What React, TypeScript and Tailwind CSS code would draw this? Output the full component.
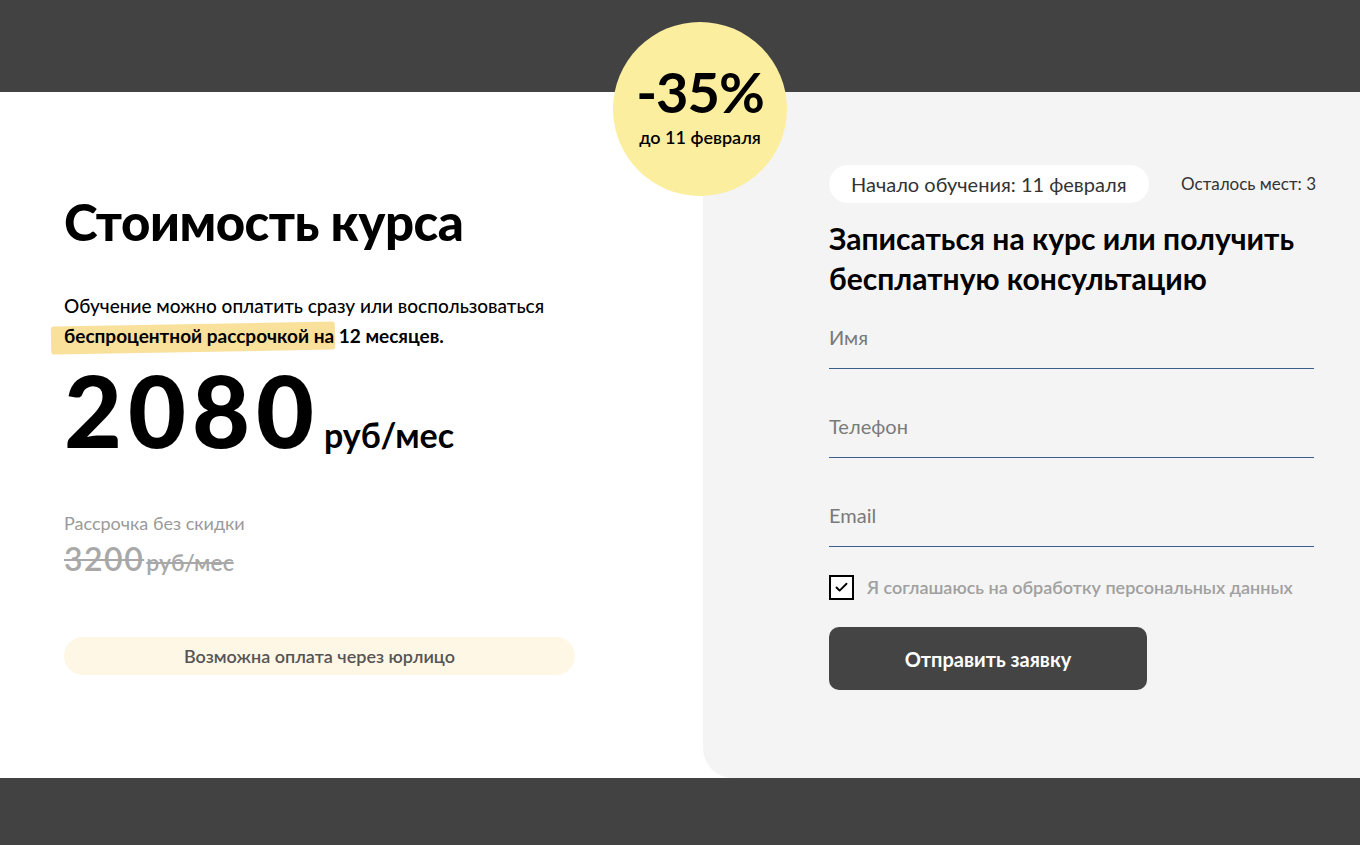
import { Check } from 'lucide-react'

const font = { fontFamily: '"Lato", "Noto Sans", sans-serif' }

function Field({ label }: { label: string }) {
  return (
    <div className="flex h-[89px] flex-col justify-end">
      <div className="pb-[21px] text-[20px] leading-none text-[#7a7a7a]">{label}</div>
      <div className="h-[1.5px] bg-[#3a5f8c]" />
    </div>
  )
}

export default function App() {
  return (
    <div className="flex min-h-[845px] flex-col bg-[#424242]" style={font}>
      {/* top bar with discount badge */}
      <div className="relative h-[92px] bg-[#424242]">
        <div className="absolute left-[613px] top-[22px] z-10 flex h-[174px] w-[174px] flex-col items-center justify-center rounded-full bg-[#fcee9f] pb-[6px] text-black">
          <div className="text-[56px] font-bold leading-[52px] tracking-[-1px]">-35%</div>
          <div className="mt-[10px] text-[18px] font-semibold leading-none">до 11 февраля</div>
        </div>
      </div>

      <div className="flex h-[686px] bg-white">
        {/* price */}
        <div className="w-[703px] pl-[64px] pt-[104px]">
          <h1 className="text-[51px] font-black leading-none tracking-[-0.5px] text-black">Стоимость курса</h1>
          <p className="relative isolate mt-[44px] text-[19px] font-medium leading-[30px] text-black">
            Обучение можно оплатить сразу или воспользоваться
            <br />
            <span className="absolute left-[-13px] top-[33px] -z-10 h-[28px] w-[284px] -rotate-[1deg] rounded-[3px] bg-[#f9e09b]" />
            <span className="font-bold">беспроцентной рассрочкой на 12 месяцев.</span>
          </p>
          <div className="mt-[8px] flex items-baseline">
            <span className="text-[100px] font-black leading-[100px] tracking-[6px] text-black">2080</span>
            <span className="ml-[4px] text-[34px] font-bold leading-none text-black">руб/мес</span>
          </div>
          <div className="mt-[55px] text-[18px] leading-none text-[#9a9a9a]">Рассрочка без скидки</div>
          <div className="mt-[11px] flex items-baseline text-[#a8a8a8] line-through decoration-[2px]">
            <span className="text-[32px] font-semibold leading-none tracking-[1.5px]">3200</span>
            <span className="ml-[2px] text-[23px] font-semibold leading-none">руб/мес</span>
          </div>
          <div className="mt-[62px] flex h-[38px] w-[511px] items-center justify-center rounded-full bg-[#fff7e5] text-[18px] font-semibold text-[#555]">
            Возможна оплата через юрлицо
          </div>
        </div>

        {/* form */}
        <div className="flex-1 rounded-bl-[30px] bg-[#f4f4f4] pl-[126px] pr-[44px] pt-[73px]">
          <div className="flex items-center justify-between">
            <div className="flex h-[38px] items-center rounded-full bg-white px-[22px] text-[20px] text-[#333]">
              Начало обучения: 11 февраля
            </div>
            <div className="text-[17px] text-[#333]">Осталось мест: 3</div>
          </div>
          <h2 className="mt-[15px] text-[30px] font-bold leading-[40px] text-black">
            Записаться на курс или получить
            <br />
            бесплатную консультацию
          </h2>
          <div className="-mt-[18px] mr-[2px]">
            <Field label="Имя" />
            <Field label="Телефон" />
            <Field label="Email" />
          </div>
          <label className="mt-[27px] flex items-center gap-[13px]">
            <span className="flex h-[25px] w-[25px] items-center justify-center border-2 border-black bg-white">
              <Check className="h-[15px] w-[15px]" strokeWidth={3} />
            </span>
            <span className="text-[18px] font-semibold text-[#a0a0a0]">Я соглашаюсь на обработку персональных данных</span>
          </label>
          <button className="mt-[26px] flex h-[63px] w-[318px] items-center justify-center rounded-[10px] bg-[#444] text-[20px] font-bold text-white">
            Отправить заявку
          </button>
        </div>
      </div>

      <div className="flex-1 bg-[#424242]" />
    </div>
  )
}
